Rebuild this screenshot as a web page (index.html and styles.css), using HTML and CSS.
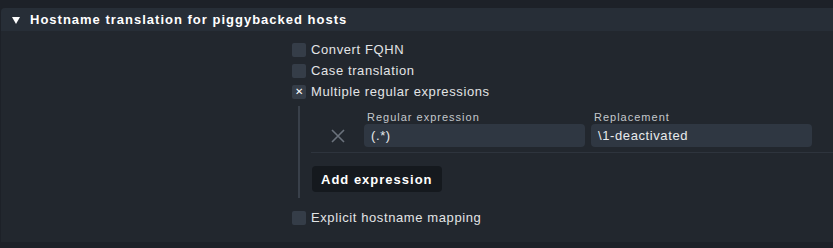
FILE: index.html
```html
<!DOCTYPE html>
<html lang="en">
<head>
    <meta charset="UTF-8">
    <title>Hostname translation</title>
    <link rel="stylesheet" href="styles.css">
</head>
<body>
    <div class="page">
        <div class="section">
            <div class="section-head">
                <span class="arrow"></span>
                <span class="section-title">Hostname translation for piggybacked hosts</span>
            </div>
            <div class="section-body">
                <div class="options">
                    <label class="check-row">
                        <span class="box"></span>
                        <span>Convert FQHN</span>
                    </label>
                    <label class="check-row">
                        <span class="box"></span>
                        <span>Case translation</span>
                    </label>
                    <label class="check-row">
                        <span class="box checked">&#x2715;</span>
                        <span>Multiple regular expressions</span>
                    </label>
                    <div class="sub">
                        <div class="expr-row">
                            <span class="remove">
                                <svg width="14" height="14" viewBox="0 0 14 14"><path d="M1 1 L13 13 M13 1 L1 13" stroke="#6b727c" stroke-width="1.6" fill="none"/></svg>
                            </span>
                            <div class="field">
                                <span class="field-label">Regular expression</span>
                                <div class="input">(.*)</div>
                            </div>
                            <div class="field">
                                <span class="field-label">Replacement</span>
                                <div class="input">\1-deactivated</div>
                            </div>
                        </div>
                        <button class="add-btn">Add expression</button>
                    </div>
                    <label class="check-row">
                        <span class="box"></span>
                        <span>Explicit hostname mapping</span>
                    </label>
                </div>
            </div>
        </div>
    </div>
</body>
</html>
```

FILE: styles.css
```css
body {
    margin: 0;
    padding: 0;
    background-color: #1d2128;
    font-family: "Liberation Sans", Arial, sans-serif;
    color: #e2e4e6;
}

.page {
    padding-top: 8px;
    height: 240px;
    overflow: hidden;
}

.section {
    background-color: #22272e;
    height: 234px;
    margin-left: 1px;
    border-radius: 4px 0 0 0;
}

.section-head {
    display: flex;
    align-items: center;
    height: 23px;
    background-color: #272e37;
    border-radius: 4px 0 0 0;
    padding-left: 11px;
}

.arrow {
    width: 0;
    height: 0;
    border-left: 4.5px solid transparent;
    border-right: 4.5px solid transparent;
    border-top: 7px solid #ffffff;
    margin-right: 10px;
    margin-top: 1px;
}

.section-title {
    font-size: 13px;
    font-weight: bold;
    letter-spacing: 1px;
    color: #ffffff;
}

.section-body {
    padding-left: 291px;
    padding-top: 8px;
}

.options {
    display: flex;
    flex-direction: column;
}

.check-row {
    display: flex;
    align-items: center;
    height: 21px;
    font-size: 13px;
    letter-spacing: 0.6px;
}

.box {
    width: 14px;
    height: 14px;
    border-radius: 2px;
    background-color: #353d48;
    margin-right: 5px;
    display: flex;
    align-items: center;
    justify-content: center;
    font-size: 10px;
    color: #ffffff;
}

.sub {
    margin-left: 6px;
    border-left: 2px solid #39404a;
    margin-top: 4px;
    margin-bottom: 9px;
    padding-top: 5px;
    padding-bottom: 6px;
}

.expr-row {
    display: flex;
    align-items: flex-end;
    padding-bottom: 5px;
    border-bottom: 1px solid #2e343d;
    margin-left: 11px;
}

.remove {
    width: 53px;
    height: 23px;
    display: flex;
    align-items: center;
    justify-content: center;
}

.field {
    display: flex;
    flex-direction: column;
    margin-right: 6px;
}

.field-label {
    font-size: 11px;
    letter-spacing: 1px;
    color: #c4c8cc;
    padding-left: 3px;
    margin-bottom: 1px;
}

.input {
    width: 214px;
    height: 23px;
    line-height: 23px;
    padding-left: 7px;
    background-color: #2f3742;
    border-radius: 4px;
    font-size: 13px;
    letter-spacing: 0.6px;
    color: #e8eaec;
}

.add-btn {
    margin-top: 13px;
    margin-left: 12px;
    height: 26px;
    padding: 0 9px;
    background-color: #15191e;
    border: none;
    border-radius: 4px;
    color: #ffffff;
    font-family: "Liberation Sans", Arial, sans-serif;
    font-size: 13px;
    font-weight: bold;
    letter-spacing: 1px;
    cursor: pointer;
}
```
